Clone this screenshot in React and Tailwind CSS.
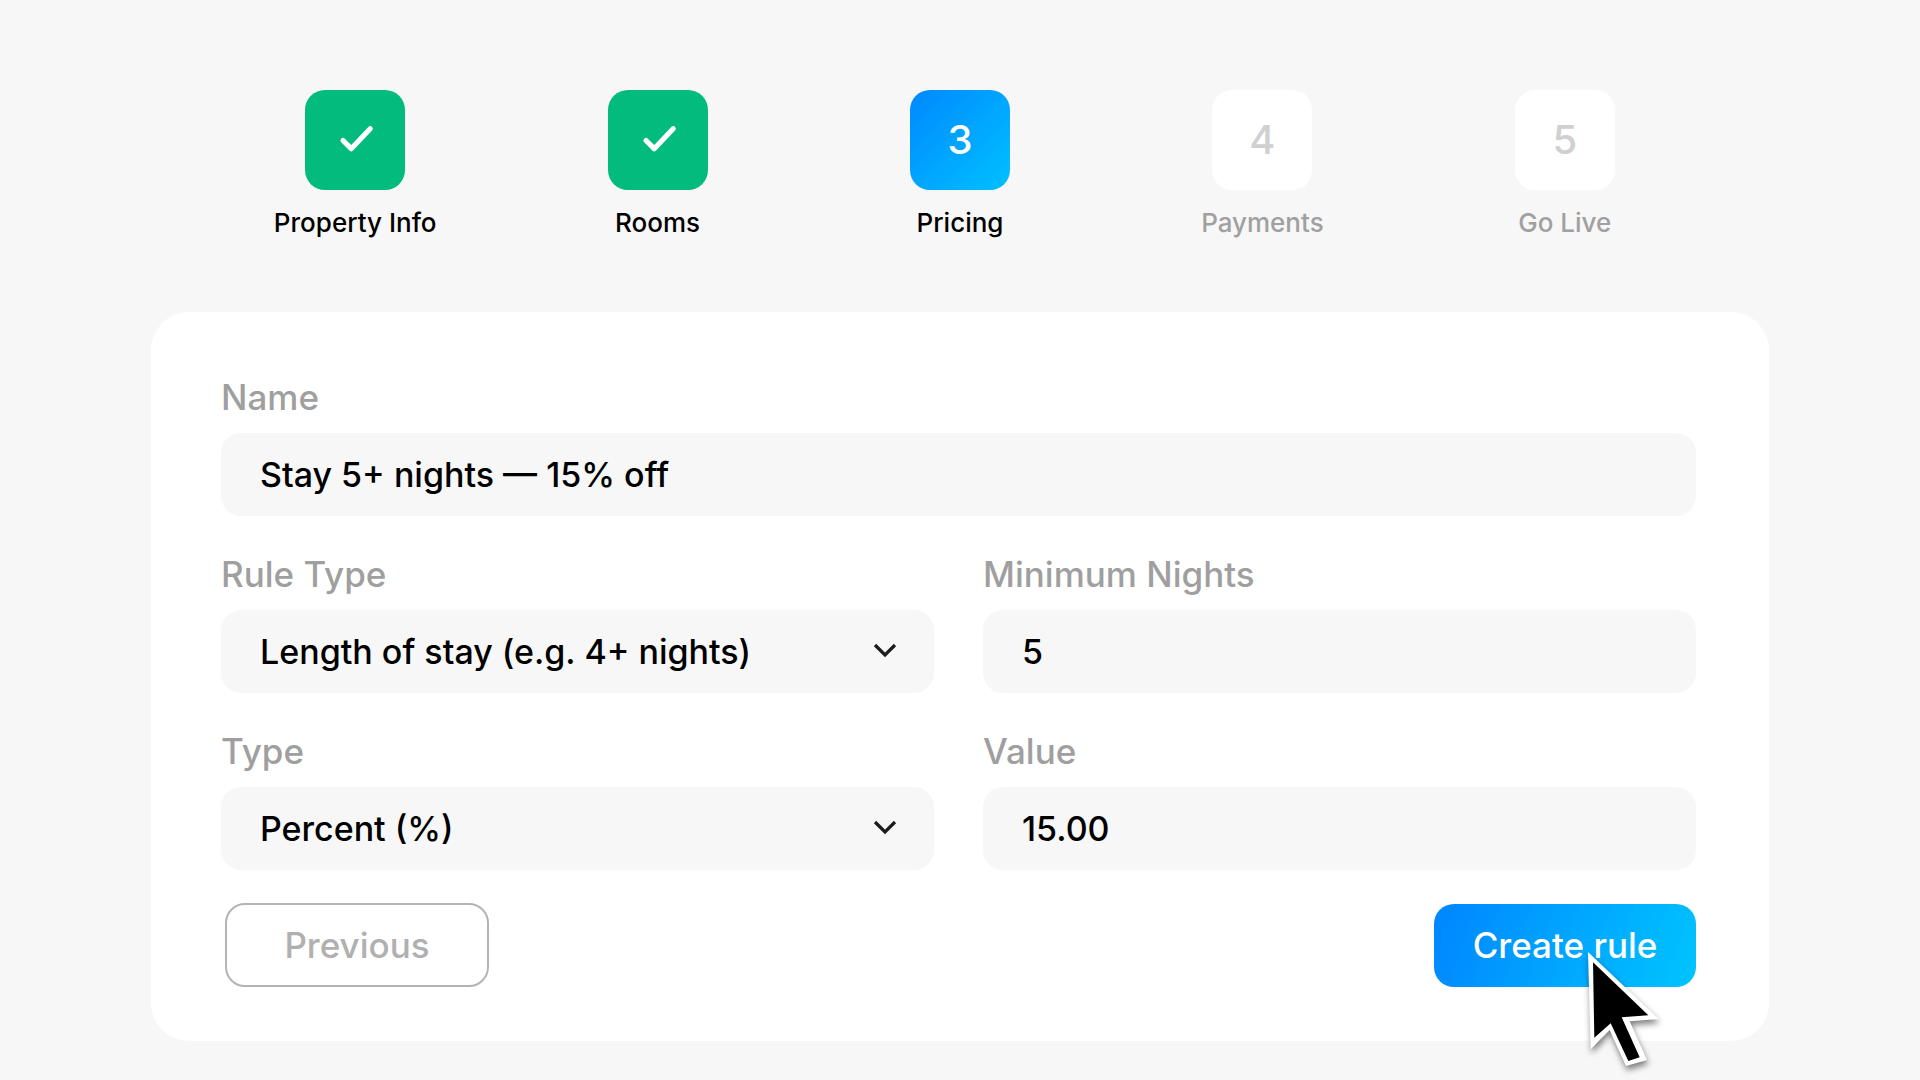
const steps = [
  { number: 1, label: 'Property Info', state: 'done' },
  { number: 2, label: 'Rooms', state: 'done' },
  { number: 3, label: 'Pricing', state: 'current' },
  { number: 4, label: 'Payments', state: 'upcoming' },
  { number: 5, label: 'Go Live', state: 'upcoming' },
];

const tileStyles = {
  done: 'bg-[#02bb7d]',
  current: 'bg-linear-135 from-[#0088ff] to-[#00c0ff] text-white',
  upcoming: 'bg-white text-[#d0d0d0]',
};

const controlClass =
  'block h-[83px] w-full appearance-none rounded-[20px] border-0 bg-[#f7f7f7] px-[39px] text-[34px] font-medium text-black outline-none focus-visible:ring-2 focus-visible:ring-[#0085ff]';

function CheckMark() {
  return (
    <svg viewBox="0 0 100 100" className="size-full" fill="none" aria-label="Completed">
      <path
        d="M38 50.5L46.2 58.7L65.2 38.7"
        stroke="white"
        strokeWidth="5.2"
        strokeLinecap="round"
        strokeLinejoin="round"
      />
    </svg>
  );
}

function Step({ number, label, state }) {
  return (
    <li
      className="flex flex-col items-center gap-[17px]"
      aria-current={state === 'current' ? 'step' : undefined}
    >
      <div
        className={`flex size-[100px] items-center justify-center rounded-[20px] text-[40px] leading-none font-medium ${tileStyles[state]}`}
      >
        {state === 'done' ? <CheckMark /> : number}
      </div>
      <span
        className={`text-[26px] leading-8 font-medium ${state === 'upcoming' ? 'text-[#a0a0a0]' : 'text-black'}`}
      >
        {label}
      </span>
    </li>
  );
}

function Field({ id, label, className = '', children }) {
  return (
    <div className={`flex flex-col gap-[14px] ${className}`}>
      <label htmlFor={id} className="text-[35px] leading-[44px] font-medium text-[#9f9f9f]">
        {label}
      </label>
      {children}
    </div>
  );
}

function Select({ id, options }) {
  return (
    <div className="relative">
      <select id={id} className={controlClass}>
        {options.map((option) => (
          <option key={option}>{option}</option>
        ))}
      </select>
      <svg
        viewBox="0 0 24 16"
        className="pointer-events-none absolute top-8 right-[37px] h-4 w-6"
        fill="none"
        aria-hidden="true"
      >
        <path d="M2 3L12 13L22 3" stroke="#1c1c1c" strokeWidth="3.2" />
      </svg>
    </div>
  );
}

function Cursor() {
  return (
    <svg
      viewBox="0 0 225 360"
      className="pointer-events-none absolute top-[46px] left-[153px] w-[75px] overflow-visible drop-shadow-[1px_4px_3px_rgba(0,0,0,0.5)]"
      aria-hidden="true"
    >
      <path d="M3 6L215 207L128 214L180 330L117 348L68 240L11 298Z" fill="white" />
      <path d="M18 37L184 196L104 202L158 322L124 333L71 220L22 263Z" fill="black" />
    </svg>
  );
}

export default function App() {
  return (
    <main className="min-h-screen bg-[#f7f7f7] px-[151px] pt-[90px] pb-[39px] font-['Inter',sans-serif]">
      <ol className="grid grid-cols-5 px-[53px]">
        {steps.map((step) => (
          <Step key={step.number} {...step} />
        ))}
      </ol>

      <form
        className="mt-[73px] rounded-[38px] bg-white pt-[63px] pr-[73px] pb-[54px] pl-[70px]"
        onSubmit={(event) => event.preventDefault()}
      >
        <div className="grid grid-cols-2 gap-x-[49px] gap-y-[36px]">
          <Field id="name" label="Name" className="col-span-2">
            <input id="name" className={controlClass} defaultValue="Stay 5+ nights — 15% off" />
          </Field>
          <Field id="rule-type" label="Rule Type">
            <Select id="rule-type" options={['Length of stay (e.g. 4+ nights)']} />
          </Field>
          <Field id="minimum-nights" label="Minimum Nights">
            <input id="minimum-nights" className={controlClass} defaultValue="5" />
          </Field>
          <Field id="type" label="Type">
            <Select id="type" options={['Percent (%)']} />
          </Field>
          <Field id="value" label="Value">
            <input id="value" className={controlClass} defaultValue="15.00" />
          </Field>
        </div>

        <div className="mt-[33px] flex items-center justify-between pl-1">
          <button
            type="button"
            className="h-[84px] w-[264px] rounded-[20px] border-2 border-[#b4b4b4] text-[35px] font-medium text-[#b0b0b0]"
          >
            Previous
          </button>
          <div className="relative">
            <button
              type="submit"
              className="h-[83px] w-[262px] rounded-[20px] bg-linear-110 from-[#0085ff] to-[#00c4ff] text-[35px] font-medium text-white"
            >
              Create rule
            </button>
            <Cursor />
          </div>
        </div>
      </form>
    </main>
  );
}
